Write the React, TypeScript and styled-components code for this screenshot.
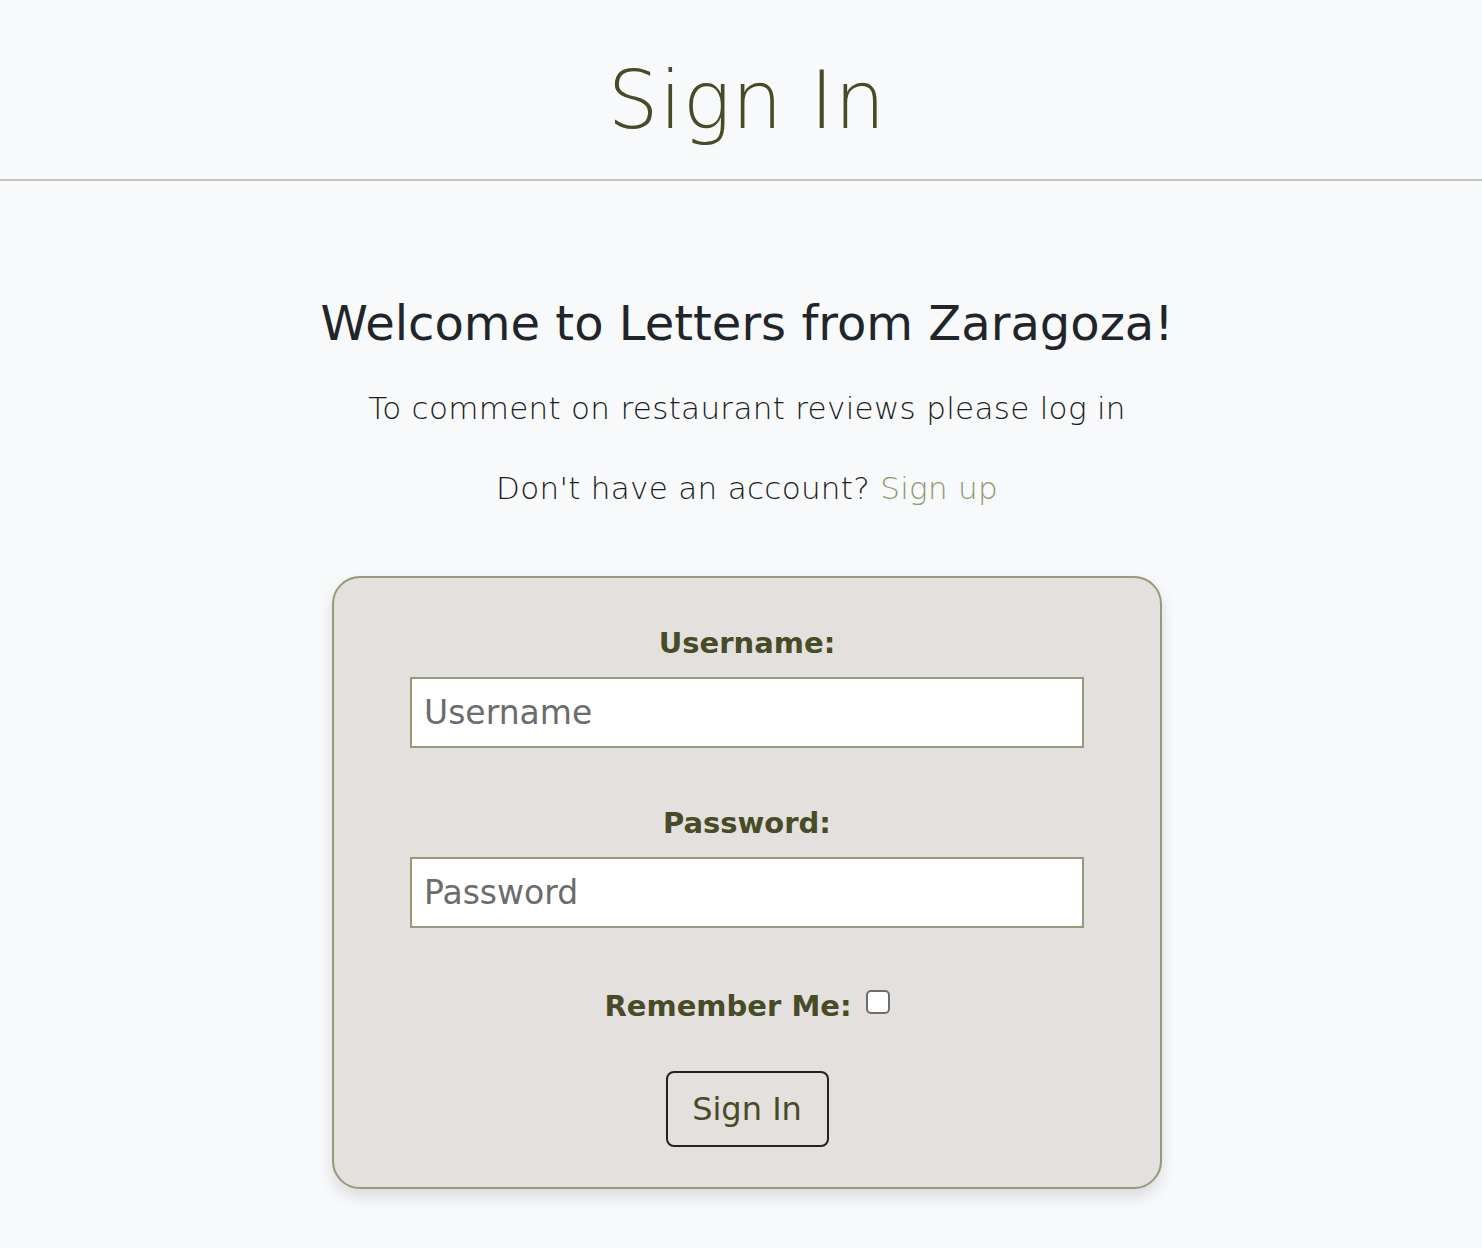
import React from "react";
import styled, { createGlobalStyle } from "styled-components";

const Global = createGlobalStyle`
  html, body { margin: 0; padding: 0; background: #f8f9fa; }
  body { font-family: "DejaVu Sans", "Open Sans", sans-serif; color: #212529; }
  * { box-sizing: border-box; }
`;

const Header = styled.header`
  display: flex;
  justify-content: center;
  align-items: center;
  height: 181px;
  padding-left: 12px;
  border-bottom: 2px solid #c4c4c4;
`;

const Title = styled.h1`
  margin: 0;
  padding-top: 22px;
  font-size: 80px;
  font-weight: 200;
  color: #474b26;
  letter-spacing: 1px;
`;

const Main = styled.main`
  display: flex;
  flex-direction: column;
  align-items: center;
  padding: 112px 0 0 12px;
`;

const Welcome = styled.h2`
  margin: 0;
  font-size: 48px;
  font-weight: 500;
  color: #212529;
  line-height: 60px;
`;

const Lead = styled.p`
  margin: 26px 0 0;
  font-size: 31px;
  font-weight: 300;
  letter-spacing: 0.3px;
  line-height: 54px;
  color: #1a1d20;
  &:first-of-type { margin-top: 28px; }
`;

const SignUp = styled.a`
  color: #8f9a72;
  text-decoration: none;
`;

const Card = styled.form`
  margin-top: 61px;
  width: 830px;
  background: #e4e0dd;
  border: 2px solid #979a78;
  border-radius: 28px;
  box-shadow: 0 8px 16px rgba(0, 0, 0, 0.12);
  display: flex;
  flex-direction: column;
  align-items: center;
  padding: 45px 0 40px;
  margin-bottom: 60px;
`;

const Label = styled.label`
  font-size: 29px;
  font-weight: 600;
  color: #474b26;
  line-height: 40px;
  margin-bottom: 14px;
`;

const Field = styled.div<{ $gap: number }>`
  display: flex;
  flex-direction: column;
  align-items: center;
  margin-bottom: ${(p) => p.$gap}px;
`;

const Input = styled.input`
  width: 674px;
  height: 71px;
  border: 2px solid #979a78;
  background: #fff;
  font-family: inherit;
  font-size: 33px;
  padding: 0 12px;
  color: #212529;
  outline: none;
  &::placeholder { color: #6c6c6c; }
`;

const Remember = styled.div`
  display: flex;
  align-items: center;
  gap: 14px;
  margin-bottom: 48px;
`;

const RememberLabel = styled.label`
  font-size: 29px;
  font-weight: 600;
  color: #474b26;
`;

const Check = styled.input`
  width: 24px;
  height: 24px;
  margin: 0 0 8px;
  appearance: none;
  border: 2px solid #6e6e6e;
  border-radius: 5px;
  background: #fff;
`;

const Button = styled.button`
  width: 163px;
  height: 76px;
  border: 2px solid #222;
  border-radius: 8px;
  background: transparent;
  font-family: inherit;
  font-size: 32px;
  font-weight: 500;
  color: #474b26;
`;

export default function App() {
  return (
    <>
      <Global />
      <Header>
        <Title>Sign In</Title>
      </Header>
      <Main>
        <Welcome>Welcome to Letters from Zaragoza!</Welcome>
        <Lead>To comment on restaurant reviews please log in</Lead>
        <Lead>
          Don't have an account? <SignUp href="#">Sign up</SignUp>
        </Lead>
        <Card onSubmit={(e) => e.preventDefault()}>
          <Field $gap={55}>
            <Label htmlFor="u">Username:</Label>
            <Input id="u" placeholder="Username" />
          </Field>
          <Field $gap={61}>
            <Label htmlFor="p">Password:</Label>
            <Input id="p" type="password" placeholder="Password" />
          </Field>
          <Remember>
            <RememberLabel htmlFor="r">Remember Me:</RememberLabel>
            <Check id="r" type="checkbox" />
          </Remember>
          <Button type="submit">Sign In</Button>
        </Card>
      </Main>
    </>
  );
}
